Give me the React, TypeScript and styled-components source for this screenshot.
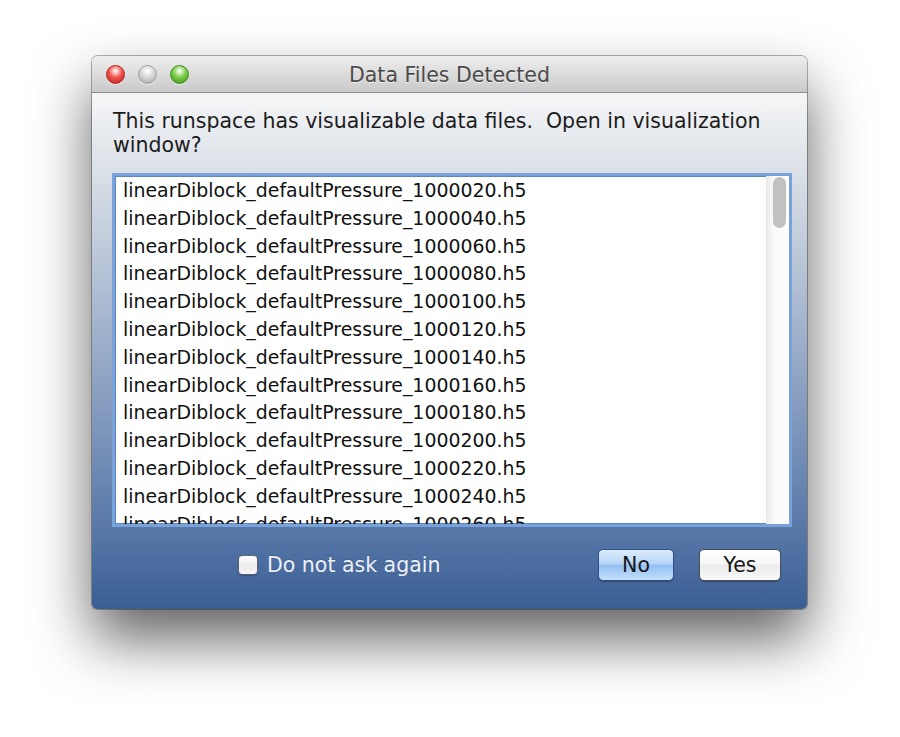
import React from "react";
import styled, { createGlobalStyle } from "styled-components";

const Global = createGlobalStyle`
  html, body { margin: 0; padding: 0; background: #ffffff; }
  body { font-family: "DejaVu Sans", "Liberation Sans", sans-serif; }
`;

const Page = styled.div`
  width: 900px;
  height: 737px;
  padding: 56px 0 0 92px;
  box-sizing: border-box;
  overflow: hidden;
`;

const Window = styled.div`
  width: 715px;
  height: 553px;
  display: flex;
  flex-direction: column;
  border-radius: 6px 6px 5px 5px;
  overflow: hidden;
  box-shadow: 0 30px 58px rgba(0, 0, 0, 0.62), 0 0 0 1px rgba(0, 0, 0, 0.3);
`;

const TitleBar = styled.div`
  height: 36px;
  flex: none;
  position: relative;
  display: flex;
  align-items: center;
  justify-content: center;
  background: linear-gradient(#eeeeee, #dcdcdc 50%, #c9c9c9);
  border-bottom: 1px solid #8e8e8e;
`;

const Lights = styled.div`
  position: absolute;
  left: 14px;
  top: 9px;
  display: flex;
  gap: 13px;
`;

const Light = styled.div<{ $c: string; $d: string }>`
  width: 19px;
  height: 19px;
  border-radius: 50%;
  box-sizing: border-box;
  border: 1px solid ${(p) => p.$d};
  background: radial-gradient(circle at 50% 30%, #ffffff 0%, ${(p) => p.$c} 45%, ${(p) => p.$d} 100%);
  box-shadow: 0 1px 1px rgba(255, 255, 255, 0.7);
`;

const Title = styled.div`
  font-size: 20.5px;
  color: #4a4a4a;
  text-shadow: 0 1px 0 rgba(255, 255, 255, 0.6);
  margin-top: 1px;
`;

const Content = styled.div`
  flex: 1;
  display: flex;
  flex-direction: column;
  padding: 16px 15px 0 20px;
  background: linear-gradient(#f5f6f7, #dde2e9 14%, #5d7cab 82%, #3a5e94);
`;

const Message = styled.div`
  font-size: 20.5px;
  line-height: 24px;
  color: #1c1c1c;
  white-space: pre-wrap;
  padding-left: 1px;
`;

const ListBox = styled.div`
  margin-top: 16px;
  height: 354px;
  box-sizing: border-box;
  border: 3px solid #78a2da;
  box-shadow: inset 0 0 0 1px #5d86c2;
  background: #ffffff;
  display: flex;
  overflow: hidden;
`;

const Rows = styled.div`
  flex: 1;
  padding: 1px 0 0 8px;
  overflow: hidden;
`;

const Row = styled.div`
  height: 27.8px;
  line-height: 27.8px;
  font-size: 18.9px;
  color: #111111;
  white-space: nowrap;
`;

const Track = styled.div`
  width: 23px;
  flex: none;
  background: linear-gradient(90deg, #ececec, #fafafa 30%, #fdfdfd);
  border-left: 1px solid #e6e6e6;
  padding: 1px 0 0 6px;
  box-sizing: border-box;
`;

const Thumb = styled.div`
  width: 13px;
  height: 51px;
  border-radius: 7px;
  background: #c1c1c1;
`;

const Footer = styled.div`
  display: flex;
  align-items: center;
  padding: 22px 11px 28px 126px;
`;

const CheckLabel = styled.label`
  display: flex;
  align-items: center;
  gap: 9px;
  font-size: 20.5px;
  color: #eef2f8;
  text-shadow: 0 -1px 0 rgba(0, 0, 0, 0.15);
`;

const CheckBox = styled.span`
  width: 20px;
  height: 20px;
  box-sizing: border-box;
  border-radius: 4px;
  border: 1px solid #5b6478;
  background: linear-gradient(#ffffff, #ececec 55%, #f8f8f8);
  box-shadow: 0 1px 1px rgba(0, 0, 0, 0.25);
`;

const Spacer = styled.div`
  flex: 1;
`;

const Button = styled.button<{ $primary?: boolean; $w: number }>`
  width: ${(p) => p.$w}px;
  height: 32px;
  box-sizing: border-box;
  border-radius: 5px;
  font-family: "DejaVu Sans", "Liberation Sans", sans-serif;
  font-size: 20.5px;
  color: #161616;
  padding: 0;
  margin-left: ${(p) => (p.$primary ? 0 : 25)}px;
  border: 1px solid ${(p) => (p.$primary ? "#34508a" : "#4a4e5a")};
  background: ${(p) =>
    p.$primary
      ? "linear-gradient(#dcebfc, #b8d6f8 45%, #93c0f3 52%, #c4e0fb)"
      : "linear-gradient(#ffffff, #f6f6f6 45%, #ebebeb 52%, #f9f9f9)"};
  box-shadow: 0 1px 1px rgba(0, 0, 0, 0.3);
`;

const files = [
  "1000020", "1000040", "1000060", "1000080", "1000100", "1000120", "1000140",
  "1000160", "1000180", "1000200", "1000220", "1000240", "1000260",
];

export default function App() {
  return (
    <Page>
      <Global />
      <Window>
        <TitleBar>
          <Lights>
            <Light $c="#f0524e" $d="#b8211c" />
            <Light $c="#d6d6d6" $d="#a0a0a0" />
            <Light $c="#79cc45" $d="#3d8f1c" />
          </Lights>
          <Title>Data Files Detected</Title>
        </TitleBar>
        <Content>
          <Message>{"This runspace has visualizable data files.  Open in visualization window?"}</Message>
          <ListBox>
            <Rows>
              {files.map((f) => (
                <Row key={f}>{`linearDiblock_defaultPressure_${f}.h5`}</Row>
              ))}
            </Rows>
            <Track>
              <Thumb />
            </Track>
          </ListBox>
          <Footer>
            <CheckLabel>
              <CheckBox />
              Do not ask again
            </CheckLabel>
            <Spacer />
            <Button $primary $w={76}>No</Button>
            <Button $w={82}>Yes</Button>
          </Footer>
        </Content>
      </Window>
    </Page>
  );
}
